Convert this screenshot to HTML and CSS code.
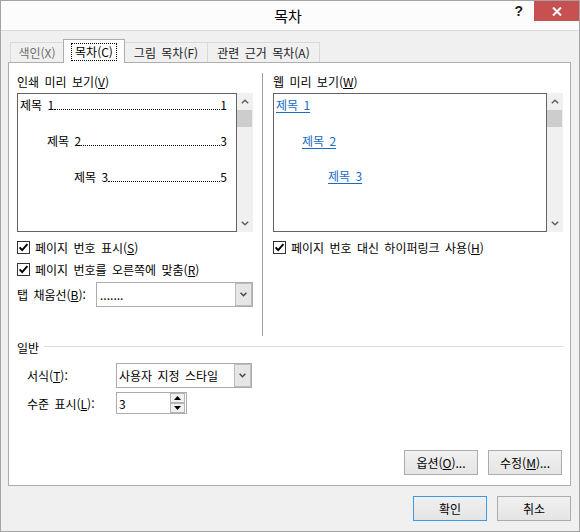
FILE: index.html
```html
<!DOCTYPE html>
<html lang="ko">
<head>
<meta charset="utf-8">
<title>목차</title>
<link rel="stylesheet" href="styles.css">
</head>
<body>
<div class="window">
  <div class="titlebar">
    <div></div>
    <div class="title">목차</div>
    <div class="controls">
      <span class="help">?</span>
      <span class="close"><svg width="10" height="9" viewBox="0 0 10 9"><path d="M1 0.5 L9 8.5 M9 0.5 L1 8.5" stroke="#fff" stroke-width="2" fill="none"/></svg></span>
    </div>
  </div>
  <div class="body">
    <div class="tabs">
      <div class="tab t1 dim">색인(X)</div>
      <div class="tab active"><span class="focus">목차(C)</span></div>
      <div class="tab t3">그림 목차(F)</div>
      <div class="tab t4">관련 근거 목차(A)</div>
    </div>
    <div class="panel">
      <div class="top">
        <div class="col">
          <div class="label">인쇄 미리 보기(<u>V</u>)</div>
          <div class="preview">
            <div class="box print">
              <div class="toc"><span>제목 1</span><span class="dots"></span><span>1</span></div>
              <div class="toc l2"><span>제목 2</span><span class="dots"></span><span>3</span></div>
              <div class="toc l3"><span>제목 3</span><span class="dots"></span><span>5</span></div>
            </div>
            <div class="scroll">
              <div class="arrow"><svg width="8" height="5" viewBox="0 0 8 5"><path d="M0.8 4.3 L4 1.2 L7.2 4.3" stroke="#606060" stroke-width="1.5" fill="none"/></svg></div>
              <div class="thumb"></div>
              <div class="spacer"></div>
              <div class="arrow"><svg width="8" height="5" viewBox="0 0 8 5"><path d="M0.8 0.7 L4 3.8 L7.2 0.7" stroke="#606060" stroke-width="1.5" fill="none"/></svg></div>
            </div>
          </div>
          <div class="check first">
            <svg class="cb" width="13" height="13" viewBox="0 0 13 13"><rect x="0.5" y="0.5" width="12" height="12" fill="#fff" stroke="#333"/><path d="M2.6 6.4 L5.2 9.2 L10.4 3.2" stroke="#000" stroke-width="1.9" fill="none"/></svg>
            <span>페이지 번호 표시(<u>S</u>)</span>
          </div>
          <div class="check">
            <svg class="cb" width="13" height="13" viewBox="0 0 13 13"><rect x="0.5" y="0.5" width="12" height="12" fill="#fff" stroke="#333"/><path d="M2.6 6.4 L5.2 9.2 L10.4 3.2" stroke="#000" stroke-width="1.9" fill="none"/></svg>
            <span>페이지 번호를 오른쪽에 맞춤(<u>R</u>)</span>
          </div>
          <div class="field">
            <span class="flabel">탭 채움선(<u>B</u>):</span>
            <div class="combo leader">
              <span class="ctext">.......</span>
              <span class="drop"><svg width="7" height="5" viewBox="0 0 7 5"><path d="M0.6 0.8 L3.5 3.8 L6.4 0.8" stroke="#444" stroke-width="1.4" fill="none"/></svg></span>
            </div>
          </div>
        </div>
        <div class="sep"></div>
        <div class="col">
          <div class="label">웹 미리 보기(<u>W</u>)</div>
          <div class="preview">
            <div class="box web">
              <div class="link"><span>제목 1</span></div>
              <div class="link l2"><span>제목 2</span></div>
              <div class="link l3"><span>제목 3</span></div>
            </div>
            <div class="scroll">
              <div class="arrow"><svg width="8" height="5" viewBox="0 0 8 5"><path d="M0.8 4.3 L4 1.2 L7.2 4.3" stroke="#606060" stroke-width="1.5" fill="none"/></svg></div>
              <div class="thumb"></div>
              <div class="spacer"></div>
              <div class="arrow"><svg width="8" height="5" viewBox="0 0 8 5"><path d="M0.8 0.7 L4 3.8 L7.2 0.7" stroke="#606060" stroke-width="1.5" fill="none"/></svg></div>
            </div>
          </div>
          <div class="check first">
            <svg class="cb" width="13" height="13" viewBox="0 0 13 13"><rect x="0.5" y="0.5" width="12" height="12" fill="#fff" stroke="#333"/><path d="M2.6 6.4 L5.2 9.2 L10.4 3.2" stroke="#000" stroke-width="1.9" fill="none"/></svg>
            <span>페이지 번호 대신 하이퍼링크 사용(<u>H</u>)</span>
          </div>
        </div>
      </div>
      <div class="legend"><span>일반</span><span class="rule"></span></div>
      <div class="row format">
        <span class="rlabel">서식(<u>T</u>):</span>
        <div class="combo style">
          <span class="ctext">사용자 지정 스타일</span>
          <span class="drop"><svg width="7" height="5" viewBox="0 0 7 5"><path d="M0.6 0.8 L3.5 3.8 L6.4 0.8" stroke="#444" stroke-width="1.4" fill="none"/></svg></span>
        </div>
      </div>
      <div class="row level">
        <span class="rlabel">수준 표시(<u>L</u>):</span>
        <div class="spin">
          <span class="ctext">3</span>
          <span class="spinbtns">
            <span class="sb"><svg width="7" height="4" viewBox="0 0 7 4"><path d="M0 4 L3.5 0 L7 4 Z" fill="#000"/></svg></span>
            <span class="sb"><svg width="7" height="4" viewBox="0 0 7 4"><path d="M0 0 L7 0 L3.5 4 Z" fill="#000"/></svg></span>
          </span>
        </div>
      </div>
      <div class="buttons">
        <button class="btn">옵션(<u>O</u>)...</button>
        <button class="btn">수정(<u>M</u>)...</button>
      </div>
    </div>
    <div class="footer">
      <button class="btn default">확인</button>
      <button class="btn">취소</button>
    </div>
  </div>
</div>
</body>
</html>
```
FILE: styles.css
```css
* { box-sizing: border-box; }
html, body { margin: 0; padding: 0; }
body {
  width: 580px;
  height: 532px;
  overflow: hidden;
  background: #f0f0f0;
  font-family: "Noto Sans CJK KR", "Noto Sans", sans-serif;
  font-size: 12px;
  word-spacing: 2px;
  color: #000;
}
u { text-decoration: underline; text-underline-offset: 1px; }

.window {
  width: 580px;
  height: 532px;
  border: 1px solid #a3a3a3;
  background: #f0f0f0;
  display: flex;
  flex-direction: column;
}

.titlebar {
  height: 30px;
  flex: none;
  background: #fcfcfc;
  border-bottom: 1px solid #d9d9d9;
  display: grid;
  grid-template-columns: 1fr auto 1fr;
}
.title {
  font-size: 15px;
  line-height: 29px;
  margin-right: 4px;
  color: #000;
}
.controls {
  justify-self: end;
  display: flex;
  align-items: flex-start;
}
.help {
  font-family: "Liberation Sans", sans-serif;
  font-weight: bold;
  font-size: 14px;
  line-height: 16px;
  margin: 2px 11px 0 0;
  color: #1e1e1e;
}
.close {
  width: 45px;
  height: 20px;
  background: #c75050;
  display: flex;
  align-items: center;
  justify-content: center;
}

.body {
  flex: 1;
  padding: 8px 8px 0 7px;
}

.tabs {
  height: 23px;
  display: flex;
  align-items: flex-end;
  padding-left: 2px;
}
.tab {
  height: 20px;
  border: 1px solid #d9d9d9;
  border-bottom: none;
  background: #f0f0f0;
  line-height: 19px;
  text-align: center;
  margin-left: -1px;
  color: #222;
}
.t1 { width: 54px; margin-left: 0; }
.dim { color: #6d6d6d; }
.t3 { width: 84px; }
.t4 { width: 113px; }
.tab.active {
  width: 62px;
  height: 24px;
  margin-bottom: -1px;
  background: #fff;
  border-color: #adadad;
  position: relative;
  z-index: 1;
  padding-top: 2px;
  color: #000;
}
.focus {
  display: inline-block;
  border: 1px dotted #000;
  line-height: 16px;
  padding: 0 3px;
}

.panel {
  background: #fff;
  border: 1px solid #adadad;
  padding: 0 7px 10px 8px;
}

.top {
  height: 273px;
  padding-top: 10px;
  display: grid;
  grid-template-columns: 236px 20px 290px;
}
.col { display: flex; flex-direction: column; }
.sep {
  width: 1px;
  background: #a0a0a0;
  margin-left: 9px;
}
.label { line-height: 18px; height: 18px; }
.preview {
  margin-top: 2px;
  height: 139px;
  display: flex;
}
.box {
  flex: 1;
  border: 1px solid #646464;
  background: #fff;
  padding-top: 3px;
}
.scroll {
  width: 16px;
  background: #f0f0f0;
  display: flex;
  flex-direction: column;
}
.arrow {
  height: 17px;
  display: flex;
  align-items: center;
  justify-content: center;
}
.thumb {
  height: 17px;
  margin-right: 1px;
  background: #cdcdcd;
}
.spacer { flex: 1; }

.print { padding-left: 2px; padding-right: 9px; }
.toc {
  display: flex;
  line-height: 16px;
  height: 16px;
  margin-bottom: 20px;
}
.toc.l2 { margin-left: 27px; }
.toc.l3 { margin-left: 54px; }
.dots {
  flex: 1;
  height: 13px;
  align-self: flex-start;
  border-bottom: 1px dotted #000;
}

.web { padding-left: 2px; }
.link {
  line-height: 16px;
  height: 16px;
  margin-bottom: 19.5px;
  color: #1a6bc6;
}
.link span {
  text-decoration: underline;
  text-underline-offset: 2px;
}
.link.l2 { margin-left: 26px; }
.link.l3 { margin-left: 52px; }

.check {
  display: flex;
  align-items: center;
  gap: 5px;
  height: 18px;
  margin-top: 4px;
}
.check.first { margin-top: 6px; }
.cb { flex: none; }

.field {
  display: flex;
  align-items: center;
  height: 25px;
  margin-top: 4px;
}
.flabel { width: 79px; }
.combo {
  height: 25px;
  border: 1px solid #acacac;
  background: #fff;
  display: flex;
  align-items: center;
}
.combo.leader { width: 157px; }
.combo.style { width: 136px; }
.ctext { padding-left: 2px; flex: 1; }
.leader .ctext { padding-left: 3px; }
.drop {
  width: 17px;
  height: 100%;
  border: 1px solid #bcbcbc;
  background: #e6e6e6;
  display: flex;
  align-items: center;
  justify-content: center;
}

.legend {
  display: flex;
  height: 18px;
  line-height: 18px;
  margin-top: 3px;
}
.rule {
  flex: 1;
  height: 1px;
  background: #dcdcdc;
  margin: 7px 0 0 5px;
}

.row {
  display: flex;
  align-items: center;
  padding-left: 10px;
}
.rlabel { width: 89px; }
.row.format { height: 25px; margin-top: 6px; }
.row.level { height: 22px; margin-top: 4px; }

.spin {
  width: 71px;
  height: 22px;
  border: 1px solid #acacac;
  background: #fff;
  display: flex;
  align-items: center;
  padding-right: 1px;
}
.spinbtns {
  width: 15px;
  height: 20px;
  display: flex;
  flex-direction: column;
}
.sb {
  height: 10px;
  border: 1px solid #b4b4b4;
  background: #f0f0f0;
  display: flex;
  align-items: center;
  justify-content: center;
}

.buttons {
  display: flex;
  justify-content: flex-end;
  gap: 10px;
  margin-top: 36px;
  padding-right: 1px;
}
.btn {
  width: 74px;
  height: 25px;
  border: 1px solid #acacac;
  background: linear-gradient(#f0f0f0, #e5e5e5);
  font-family: "Noto Sans CJK KR", "Noto Sans", sans-serif;
  font-size: 12px;
  word-spacing: 2px;
  line-height: 21px;
  color: #000;
  padding: 0;
  margin: 0;
}
.btn.default { border-color: #3c9be6; }

.footer {
  display: flex;
  justify-content: flex-end;
  gap: 10px;
  margin-top: 10px;
}
```
